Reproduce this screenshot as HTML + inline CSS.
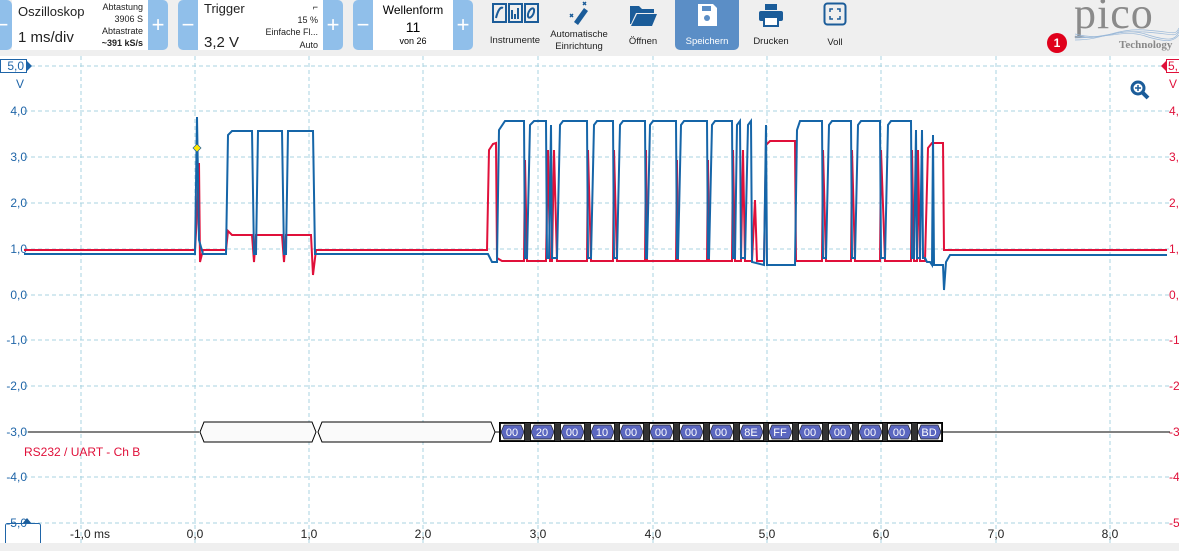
<!DOCTYPE html>
<html><head><meta charset="utf-8"><style>
*{margin:0;padding:0;box-sizing:border-box}
body{width:1179px;height:551px;overflow:hidden;background:#fff;font-family:"Liberation Sans",sans-serif;position:relative}
.tb{position:absolute;left:0;top:0;width:1179px;height:56px;background:#efefef}
.pn{position:absolute;top:0;height:50px;background:#fff}
.bt{position:absolute;top:0;height:50px;width:20px;background:#90bfea;color:#fff;font-size:22px;text-align:center;line-height:50px}
.t{position:absolute;white-space:nowrap;color:#222}
.ic{position:absolute;top:0;height:50px;text-align:center;font-size:9.5px;color:#222}
.bot{position:absolute;left:0;top:543px;width:1179px;height:8px;background:#efefef}
</style></head><body>
<div class="tb">
 <div class="bt" style="left:-8px;border-radius:0 5px 5px 0">−</div>
 <div class="pn" style="left:12px;width:136px">
  <div class="t" style="left:6px;top:4px;font-size:13px">Oszilloskop</div>
  <div class="t" style="left:6px;top:29px;font-size:15px">1 ms/div</div>
  <div class="t" style="right:5px;top:1px;font-size:9px;text-align:right;line-height:12px">Abtastung<br>3906 S<br>Abtastrate<br><b>~391 kS/s</b></div>
 </div>
 <div class="bt" style="left:148px;border-radius:0 5px 5px 0">+</div>
 <div class="bt" style="left:178px;border-radius:5px 0 0 5px">−</div>
 <div class="pn" style="left:198px;width:125px">
  <div class="t" style="left:6px;top:1px;font-size:13px">Trigger</div>
  <div class="t" style="left:6px;top:34px;font-size:15px">3,2 V</div>
  <div class="t" style="right:5px;top:1px;font-size:9px;text-align:right;line-height:12.5px">⌐<br>15 %<br>Einfache Fl...<br>Auto</div>
 </div>
 <div class="bt" style="left:323px;border-radius:0 5px 5px 0">+</div>
 <div class="bt" style="left:353px;border-radius:5px 0 0 5px">−</div>
 <div class="pn" style="left:373px;width:80px;text-align:center">
  <div style="font-size:12px;margin-top:3px">Wellenform</div>
  <div style="font-size:14px;margin-top:2px">11</div>
  <div style="font-size:9px;margin-top:1px">von 26</div>
 </div>
 <div class="bt" style="left:453px;border-radius:0 5px 5px 0">+</div>

 <div class="ic" style="left:485px;width:60px">
  <svg width="48" height="22" style="margin-top:2px"><g fill="none" stroke="#1b5c99" stroke-width="2"><rect x="2" y="2" width="13" height="18"/><rect x="18" y="2" width="13" height="18"/><rect x="34" y="2" width="13" height="18"/><path d="M5 16 Q8 4 12 6"/><path d="M21 17V8M24 17V12M27 17V6"/><ellipse cx="40" cy="11" rx="2.5" ry="5" transform="rotate(25 40 11)"/></g></svg>
  <div style="margin-top:8px">Instrumente</div></div>
 <div class="ic" style="left:547px;width:64px">
  <svg width="26" height="26" style="margin-top:0"><path d="M8 22 L18 8 L22 11 L12 25Z" fill="#1b5c99"/><path d="M17 2 L20 5 M20 2 L17 5 M4 14l3 3M7 14l-3 3" stroke="#1b5c99" stroke-width="1.5"/></svg>
  <div style="margin-top:0;line-height:12px">Automatische<br>Einrichtung</div></div>
 <div class="ic" style="left:618px;width:50px">
  <svg width="30" height="26" style="margin-top:2px"><path d="M2 4h9l3 3h12v4H8L3 22H2Z" fill="#1b5c99"/><path d="M9 12h20l-5 12H3Z" fill="#1b5c99"/></svg>
  <div style="margin-top:5px">Öffnen</div></div>
 <div class="ic" style="left:675px;width:64px;background:#5b8ec6;border-radius:0 0 5px 5px;color:#fff">
  <svg width="22" height="24" style="margin-top:3px"><path d="M2 1h15l4 4v18H2Z" fill="#fff"/><circle cx="11" cy="15" r="3" fill="#5b8ec6"/><rect x="6" y="3" width="9" height="5" fill="#5b8ec6"/></svg>
  <div style="margin-top:6px">Speichern</div></div>
 <div class="ic" style="left:746px;width:50px">
  <svg width="26" height="24" style="margin-top:3px"><rect x="7" y="1" width="12" height="6" fill="#1b5c99"/><rect x="1" y="8" width="24" height="10" rx="2" fill="#1b5c99"/><rect x="6" y="14" width="14" height="9" fill="#fff" stroke="#1b5c99" stroke-width="2"/></svg>
  <div style="margin-top:6px">Drucken</div></div>
 <div class="ic" style="left:810px;width:50px">
  <svg width="24" height="24" style="margin-top:2px"><rect x="1.5" y="1.5" width="21" height="21" rx="3" fill="none" stroke="#1b5c99" stroke-width="2"/><path d="M7 10V7h3M17 10V7h-3M7 14v3h3M17 14v3h-3" fill="none" stroke="#1b5c99" stroke-width="1.5"/></svg>
  <div style="margin-top:8px">Voll</div></div>
 <div style="position:absolute;left:1047px;top:33px;width:20px;height:20px;border-radius:50%;background:#e0001b;color:#fff;font-size:12px;font-weight:bold;text-align:center;line-height:20px">1</div>
 <div class="t" style="left:1074px;top:-12px;font-family:'Liberation Serif',serif;font-size:44px;color:#8a8a8a;letter-spacing:1px">pico</div>
 <svg style="position:absolute;left:1075px;top:26px" width="104" height="18"><g fill="none" stroke="#9ab8d8" stroke-width="0.7"><path d="M0 14 C30 14 40 2 70 4 S100 10 104 2"/><path d="M0 12 C30 12 40 4 70 6 S100 12 104 4"/><path d="M0 10 C30 16 45 0 70 8 S100 14 104 6"/><path d="M0 8 C30 16 45 2 70 10 S100 14 104 9"/></g></svg>
 <div class="t" style="left:1119px;top:39px;font-family:'Liberation Serif',serif;font-size:11px;color:#888;font-weight:bold">Technology</div>
</div>

<svg style="position:absolute;left:0;top:56px" width="1179" height="487" viewBox="0 56 1179 487">
 <g stroke="#a8d3e0" stroke-width="1" stroke-dasharray="4,3" fill="none">
  <path d="M24 66H1170M24 111H1170M24 157H1170M24 203H1170M24 249H1170M24 295H1170M24 340H1170M24 386H1170M24 432H1170M24 477H1170M24 523H1170"/>
  <path d="M81 56V543M195 56V543M309 56V543M423 56V543M538 56V543M653 56V543M767 56V543M881 56V543M996 56V543M1110 56V543"/>
 </g>
 <g font-size="12" fill="#1f65a8" text-anchor="end">
  <text x="27" y="115">4,0</text><text x="27" y="161">3,0</text><text x="27" y="207">2,0</text><text x="27" y="253">1,0</text><text x="27" y="299">0,0</text><text x="27" y="344">-1,0</text><text x="27" y="390">-2,0</text><text x="27" y="436">-3,0</text><text x="27" y="481">-4,0</text><text x="27" y="527">-5,0</text>
  <text x="24" y="88">V</text>
 </g>
 <rect x="0.5" y="59.5" width="26" height="13" fill="#fff" stroke="#1f65a8"/>
 <text x="24" y="70" font-size="12" fill="#1f65a8" text-anchor="end">5,0</text>
 <path d="M27 61L32 66L27 71Z" fill="#1f65a8"/>
 <g font-size="12" fill="#e0103a">
  <text x="1169" y="115">4,</text><text x="1169" y="161">3,</text><text x="1169" y="207">2,</text><text x="1169" y="253">1,</text><text x="1169" y="299">0,</text><text x="1169" y="344">-1</text><text x="1169" y="390">-2</text><text x="1169" y="436">-3</text><text x="1169" y="481">-4</text><text x="1169" y="527">-5</text>
  <text x="1169" y="88">V</text>
 </g>
 <path d="M1166 61L1161 66L1166 71Z" fill="#e0103a"/>
 <rect x="1166.5" y="59.5" width="14" height="13" fill="#fff" stroke="#e0103a"/>
 <text x="1168" y="70" font-size="12" fill="#e0103a">5,</text>
 <g><circle cx="1138" cy="88" r="6" fill="none" stroke="#1b5c99" stroke-width="3"/><path d="M1142 92l6 6" stroke="#1b5c99" stroke-width="4"/><path d="M1135 88h6M1138 85v6" stroke="#1b5c99" stroke-width="1.5"/></g>

 <path fill="none" stroke="#e0103a" stroke-width="2" d="M24,250 H195 L197,215 L199,163 L200,262 L203,250 H226 L228,231 L232,235 H252 L254,262 L256,235 H282 L284,262 L286,235 H311 L313,275 L316,250 H487 L489,150 L493,144 L496,143 L497,258 L502,261 H524 L525,160 L527,261 H546 L548,150 L550,261 L552,261 L554,150 L557,261 H587 L588,150 L591,261 H613 L614,150 L617,261 H645 L646,150 L647,261 H676 L677,160 L678,261 H707 L708,160 L709,261 H732 L733,150 L735,261 H741 L743,150 L745,261 H752 L755,200 L757,261 H764 L766,145 L770,141 H795 L796,261 H822 L823,150 L826,261 H851 L852,150 L855,261 H880 L881,150 L885,261 H911 L912,150 L914,261 H917 L918,150 L920,261 H925 L928,148 L932,143 H943 L944,250 H1167"/>
 <path fill="none" stroke="#1565a8" stroke-width="2" d="M24,254 H195 L197,117 L199,240 L203,254 H226 L228,135 L232,131 H252 L254,254 H256 L258,131 H282 L284,254 H286 L288,131 H313 L315,254 H488 L492,262 L497,262 L499,130 L505,121 H524 L525,258 H527 L530,125 L534,121 H546 L547,258 H549 L551,125 L552,258 H557 L560,125 L563,121 H587 L588,258 H591 L594,125 L597,121 H613 L614,258 H617 L620,125 L623,121 H645 L646,258 H647 L650,125 L653,121 H676 L677,258 H678 L681,125 L684,121 H707 L708,258 H709 L712,125 L715,121 H732 L733,258 H735 L737,125 L740,121 L741,258 H745 L748,125 L751,121 L752,262 L764,265 L766,125 L767,265 H795 L797,130 L800,121 H822 L823,258 H826 L829,125 L832,121 H851 L852,258 H855 L858,125 L861,121 H880 L881,258 H885 L888,125 L891,121 H911 L912,258 H914 L916,130 L917,258 H920 L922,130 L923,258 H925 L927,262 H930 L932,265 L933,135 L934,265 H943 L944,290 L946,262 L950,255 H1167"/>
 <path d="M193 148L197 144L201 148L197 152Z" fill="#ffe800" stroke="#1b5c99" stroke-width="0.7"/>

 <path d="M28 432H199M942 432H1170" stroke="#000" stroke-width="1"/>
 <path d="M204 422H312L316 432L312 442H204L200 432Z" fill="#fafafa" stroke="#000"/>
 <path d="M322 422H491L495 432L491 442H322L318 432Z" fill="#fafafa" stroke="#000"/>
 <path d="M495 432H499" stroke="#000"/>
 <g stroke="#000" stroke-width="1" fill="#fff">
  <rect x="499.5" y="422.5" width="443" height="19" fill="#333"/>
 </g>
 <g fill="#fff" stroke="#000" stroke-width="0.8">
  <rect x="500.5" y="423.5" width="24" height="17"/><rect x="530.5" y="423.5" width="24" height="17"/><rect x="560.5" y="423.5" width="24" height="17"/><rect x="590.5" y="423.5" width="24" height="17"/><rect x="619.5" y="423.5" width="24" height="17"/><rect x="649.5" y="423.5" width="24" height="17"/><rect x="679.5" y="423.5" width="24" height="17"/><rect x="709.5" y="423.5" width="24" height="17"/><rect x="739.5" y="423.5" width="24" height="17"/><rect x="768.5" y="423.5" width="24" height="17"/><rect x="798.5" y="423.5" width="24" height="17"/><rect x="828.5" y="423.5" width="24" height="17"/><rect x="858.5" y="423.5" width="24" height="17"/><rect x="887.5" y="423.5" width="24" height="17"/><rect x="917.5" y="423.5" width="24" height="17"/>
 </g>
 <g fill="#5b67c0" stroke="#222" stroke-width="0.7">
  <path d="M504 425h17l3 7-3 7h-17l-3-7z"/><path d="M534 425h17l3 7-3 7h-17l-3-7z"/><path d="M564 425h17l3 7-3 7h-17l-3-7z"/><path d="M594 425h17l3 7-3 7h-17l-3-7z"/><path d="M623 425h17l3 7-3 7h-17l-3-7z"/><path d="M653 425h17l3 7-3 7h-17l-3-7z"/><path d="M683 425h17l3 7-3 7h-17l-3-7z"/><path d="M713 425h17l3 7-3 7h-17l-3-7z"/><path d="M743 425h17l3 7-3 7h-17l-3-7z"/><path d="M772 425h17l3 7-3 7h-17l-3-7z"/><path d="M802 425h17l3 7-3 7h-17l-3-7z"/><path d="M832 425h17l3 7-3 7h-17l-3-7z"/><path d="M862 425h17l3 7-3 7h-17l-3-7z"/><path d="M891 425h17l3 7-3 7h-17l-3-7z"/><path d="M921 425h17l3 7-3 7h-17l-3-7z"/>
 </g>
 <g font-size="11" fill="#fff" text-anchor="middle">
  <text x="512" y="436">00</text><text x="542" y="436">20</text><text x="572" y="436">00</text><text x="602" y="436">10</text><text x="631" y="436">00</text><text x="661" y="436">00</text><text x="691" y="436">00</text><text x="721" y="436">00</text><text x="751" y="436">8E</text><text x="780" y="436">FF</text><text x="810" y="436">00</text><text x="840" y="436">00</text><text x="870" y="436">00</text><text x="899" y="436">00</text><text x="929" y="436">BD</text>
 </g>
 <text x="24" y="456" font-size="12" fill="#e0103a">RS232 / UART - Ch B</text>
 <g font-size="12" fill="#222" text-anchor="middle">
  <text x="90" y="538">-1,0 ms</text><text x="195" y="538">0,0</text><text x="309" y="538">1,0</text><text x="423" y="538">2,0</text><text x="538" y="538">3,0</text><text x="653" y="538">4,0</text><text x="767" y="538">5,0</text><text x="881" y="538">6,0</text><text x="996" y="538">7,0</text><text x="1110" y="538">8,0</text>
 </g>
 <path d="M22 524L27 518L32 524Z" fill="#1b5c99"/>
 <rect x="5.5" y="523.5" width="35" height="22" rx="2" fill="none" stroke="#1f65a8"/>
</svg>
<div class="bot"></div>
</body></html>
